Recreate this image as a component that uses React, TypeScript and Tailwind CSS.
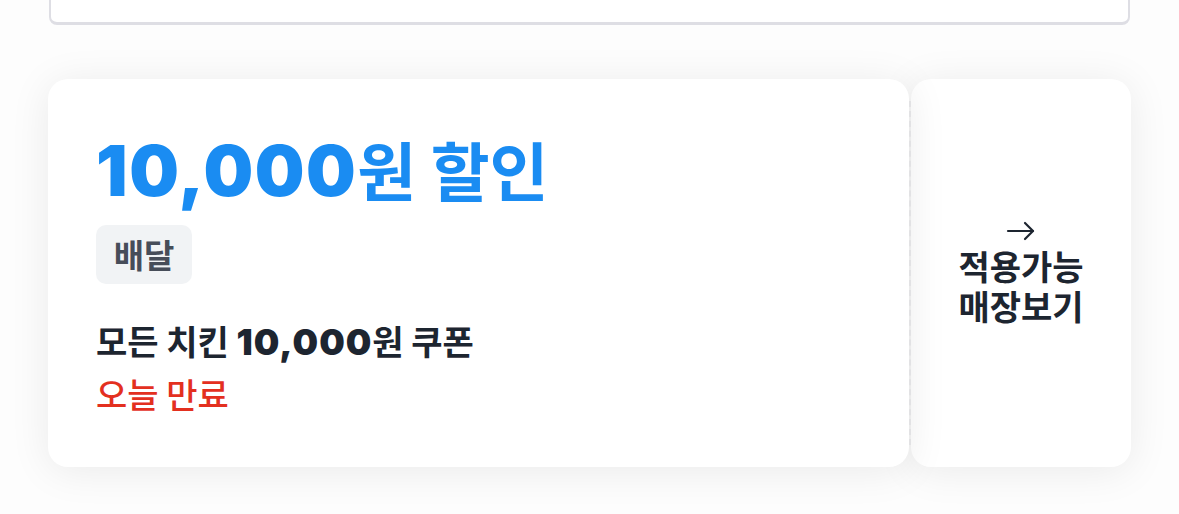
import React from 'react';

const FONT = { fontFamily: '"Noto Sans CJK KR", "Noto Sans", sans-serif' };
const NUM = { fontFamily: 'Inter, "Noto Sans CJK KR", sans-serif' };

const App: React.FC = () => {
  return (
    <div className="min-h-screen w-full bg-[#fdfdfd] px-[48px]" style={FONT}>
      {/* 위쪽 카드 (잘린 부분) */}
      <div className="h-[25px] mx-[1px] bg-white border-x-2 border-b-[3px] border-[#dedee4] rounded-b-[8px]" />

      {/* 쿠폰 */}
      <div className="mt-[54px] flex h-[388px] gap-[2px]">
        <div className="relative flex-1 bg-white rounded-[20px] shadow-[0_4px_40px_rgba(0,0,0,0.08)] pl-[48px] pt-[57px]">
          <div className="flex items-baseline text-[#1a8cf2] leading-none">
            <span className="text-[70px] font-black tracking-[1.5px]" style={NUM}>10,000</span>
            <span className="text-[64px] font-bold">원 할인</span>
          </div>
          <div className="mt-[19px] inline-flex h-[59px] w-[96px] items-center justify-center rounded-[10px] bg-[#f1f3f5] text-[33px] font-bold text-[#474d59]">
            배달
          </div>
          <div className="mt-[40px] text-[34px] font-semibold text-[#1d2530] leading-none">
            모든 치킨{' '}
            <span className="text-[36px] font-black tracking-[1px]" style={NUM}>10,000</span>원 쿠폰
          </div>
          <div className="mt-[17px] text-[34px] font-medium text-[#e3301f] leading-none">오늘 만료</div>
          <div className="absolute right-[-2px] top-[22px] bottom-[22px] border-r-2 border-dashed border-[#e2e2e4]" />
        </div>
        <div className="w-[220px] bg-white rounded-[20px] shadow-[0_4px_40px_rgba(0,0,0,0.08)] flex flex-col items-center justify-center text-[#1d2530]">
          <svg width="30" height="22" viewBox="0 0 30 22" fill="none" stroke="#1d2530" strokeWidth="2.2" strokeLinecap="round" strokeLinejoin="round">
            <path d="M2 11h25" />
            <path d="M19 3l8 8-8 8" />
          </svg>
          <div className="mt-[4px] text-[34px] font-semibold text-center">
            <div className="leading-[40px]">적용가능</div>
            <div className="leading-[40px]">매장보기</div>
          </div>
        </div>
      </div>
    </div>
  );
};

export default App;
